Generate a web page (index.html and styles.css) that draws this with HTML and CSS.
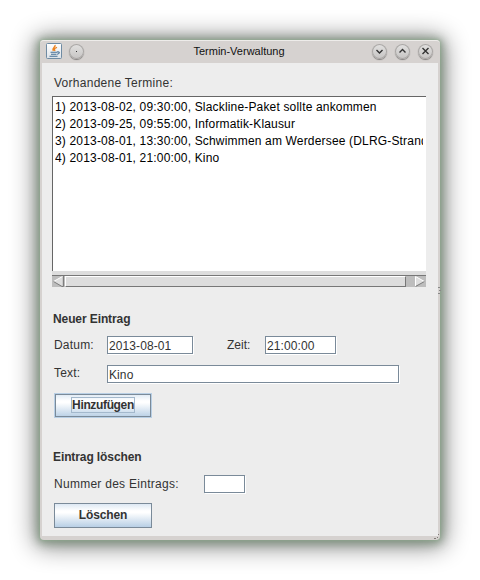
FILE: index.html
```
<!DOCTYPE html>
<html lang="de">
<head>
<meta charset="utf-8">
<title>Termin-Verwaltung</title>
<link rel="stylesheet" href="styles.css">
</head>
<body>
<div class="window">
  <header class="titlebar">
    <svg class="java" width="16" height="16" viewBox="0 0 16 16">
      <defs><linearGradient id="jg" x1="0" y1="0" x2="0" y2="1"><stop offset="0" stop-color="#fff"/><stop offset="1" stop-color="#dce2e8"/></linearGradient></defs>
      <rect x=".5" y=".5" width="15" height="15" rx="1" fill="url(#jg)" stroke="#6f8ba3"/>
      <path d="M9 2C10 4.200 5.500 4.800 7.300 8M11 4.300C8 5.300 8 6.200 9 8" fill="none" stroke="#ec811e" stroke-width="1.400"/>
      <path d="M4.500 9.300H11M5 11.200H10.500M3.500 13.300H11.500M11 9C14.300 8.300 13.800 11 11 11.300" fill="none" stroke="#466f94" stroke-width="1.100"/>
    </svg>
    <span class="round menu"><svg width="15" height="15" viewBox="0 0 15 15"><rect x="7" y="7" width="1" height="1" fill="#333"/></svg></span>
    <h1 class="title">Termin-Verwaltung</h1>
    <span class="round"><svg width="15" height="15" viewBox="0 0 15 15"><path d="M4.500 6L7.500 9L10.500 6"/></svg></span>
    <span class="round"><svg width="15" height="15" viewBox="0 0 15 15"><path d="M4.500 8.500L7.500 5.500L10.500 8.500"/></svg></span>
    <span class="round"><svg width="15" height="15" viewBox="0 0 15 15"><path d="M4.500 4L10.500 10M10.500 4L4.500 10"/></svg></span>
  </header>
  <main class="content">
    <p class="label list-label">Vorhandene Termine:</p>
    <ul class="list">
      <li>1) 2013-08-02, 09:30:00, Slackline-Paket sollte ankommen</li>
      <li>2) 2013-09-25, 09:55:00, Informatik-Klausur</li>
      <li>3) 2013-08-01, 13:30:00, Schwimmen am Werdersee (DLRG-Strand</li>
      <li>4) 2013-08-01, 21:00:00, Kino</li>
    </ul>
    <div class="scrollbar">
      <svg width="11" height="11" viewBox="0 0 11 11"><path d="M9.500 .5V10.500L.5 5.500Z" fill="#dedede"/><path d="M.5 5.500L9.500 .5" fill="none" stroke="#fff"/><path d="M10.500 0V10.500H9L.5 5.500" fill="none" stroke="#7b7b7b"/></svg>
      <div class="thumb"></div>
      <svg width="10" height="11" viewBox="0 0 10 11"><path d="M.5 .5V10L9.500 5.500Z" fill="#dedede"/><path d="M.5 10.500V.5L9.500 5.500" fill="none" stroke="#fff"/><path d="M.5 10.500L9.500 5.500" stroke="#7b7b7b"/></svg>
    </div>
    <h2 class="new-heading">Neuer Eintrag</h2>
    <div class="row date-row">
      <label class="label first datum">Datum:</label><div class="field date">2013-08-01</div>
      <label class="label zeit">Zeit:</label><div class="field time">21:00:00</div>
    </div>
    <div class="row text-row">
      <label class="label first">Text:</label><div class="field text">Kino</div>
    </div>
    <button class="button focused"><span>Hinzufügen</span></button>
    <h2 class="delete-heading">Eintrag löschen</h2>
    <div class="row number-row">
      <label class="label nummer">Nummer des Eintrags:</label><div class="field number"></div>
    </div>
    <button class="button"><span>Löschen</span></button>
  </main>
  <svg class="side-grip" width="3" height="9" viewBox="0 0 3 9"><path d="M0 1.500H2M1 4.500H3M0 7.500H2" stroke="#888"/></svg>
  <svg class="corner-grip" width="6" height="6" viewBox="0 0 6 6"><path d="M4 0h1v1h-1zM3 3h1v1h-1zM0 4h2v1h-2z" fill="#817b77"/></svg>
</div>
</body>
</html>
```

FILE: styles.css
```
* { box-sizing: border-box; }
body {
  margin: 0;
  padding: 40px;
  height: 580px;
  overflow: hidden;
  background: #fff;
  font: 12px/16px "Liberation Sans", Arial, sans-serif;
  color: #333;
}
h1, h2, p, ul { margin: 0; padding: 0; }
.window {
  position: relative;
  width: 400px;
  height: 500px;
  background: #d6d2d0;
  border-radius: 4px;
  box-shadow: 0 0 3px 0 #8fb08f, 0 1px 8px 3px rgba(110, 135, 110, .65), 0 2px 24px 5px rgba(0, 0, 0, .48);
}
.titlebar {
  display: flex;
  align-items: center;
  height: 23px;
  padding: 0 7px 2px 6px;
  border-top: 1px solid #eeecea;
  border-radius: 4px 4px 0 0;
}
.round {
  width: 15px;
  height: 15px;
  margin-left: 8px;
  border-radius: 50%;
  background: linear-gradient(#e2e1e0, #c6c4c3);
  box-shadow: 0 0 0 1px #aaa7a5 inset, 0 1px 1px rgba(0, 0, 0, .4);
}
.menu { margin-left: 7px; }
.round svg { display: block; }
.round path { fill: none; stroke: #333; stroke-width: 1.4; }
.title {
  flex: 1;
  padding-left: 30px;
  text-align: center;
  font-size: 11px;
  font-weight: normal;
  color: #111;
}
.content {
  height: 473px;
  margin: 0 2px;
  padding: 12px 12px 0 10px;
  background: #ededed;
}
.label { letter-spacing: .27px; }
.list-label { height: 21px; padding-left: 2px; }
.list {
  height: 175px;
  padding: 2px 3px 0 2px;
  border-top: 1px solid #666;
  border-left: 1px solid #666;
  background: #fff;
  color: #000;
  list-style: none;
  line-height: 17px;
}
.list li { overflow: hidden; white-space: nowrap; letter-spacing: .17px; }
.scrollbar {
  display: flex;
  height: 17px;
  padding: 1px 1px 1px 1px;
  border-top: 4px solid #ddd;
  background: linear-gradient(#777 0 1px, #bdbdbd 1px 12px, #ededed 12px);
}
.thumb {
  width: 342px;
  height: 11px;
  margin: 0 9px 0 1px;
  border: 1px solid #777;
  border-top-color: #fff;
  border-left-color: #fff;
  background: #ddd;
}
h2 { font-size: 12px; line-height: 16px; padding-left: 1px; letter-spacing: -.1px; }
.new-heading { margin-top: 23px; }
.row { display: flex; }
.date-row { margin-top: 9px; height: 19px; }
.text-row { margin-top: 10px; height: 19px; }
.number-row { margin-top: 10px; height: 19px; }
.row .label { padding-left: 2px; }
.first { width: 55px; }
.row .first { letter-spacing: .2px; }
.row .zeit { width: 40px; margin-left: 32px; letter-spacing: 0; }
.nummer { width: 152px; padding-top: 1px; }
.row .datum, .zeit { padding-top: 1px; }
.field {
  height: 18px;
  padding-left: 1px;
  border: 1px solid #7a8a99;
  background: #fff;
  box-shadow: 1px 1px 0 #fff;
  line-height: 18px;
  letter-spacing: .1px;
}
.date { width: 86px; }
.time { width: 71px; }
.text { width: 292px; }
.number { width: 41px; }
.button {
  display: block;
  width: 98px;
  height: 25px;
  margin: 9px 0 0 2px;
  padding: 0 0 1px;
  border: 1px solid #7a8a99;
  background: linear-gradient(#dde8f3 0%, #fff 30%, #fff 38%, #b8cfe5 100%);
  font: bold 12px/16px "Liberation Sans", Arial, sans-serif;
  letter-spacing: -.15px;
  color: #333;
}
.focused {
  padding-bottom: 2px;
  border-color: #b8cfe5;
  box-shadow: 0 0 0 1px #7a8a99 inset;
  letter-spacing: -.35px;
}
.focused span { outline: 1px solid #a3b8cc; }
.delete-heading { margin-top: 31px; }
.side-grip { position: absolute; left: 398px; top: 246px; }
.corner-grip { position: absolute; right: 0; bottom: 0; }
```
